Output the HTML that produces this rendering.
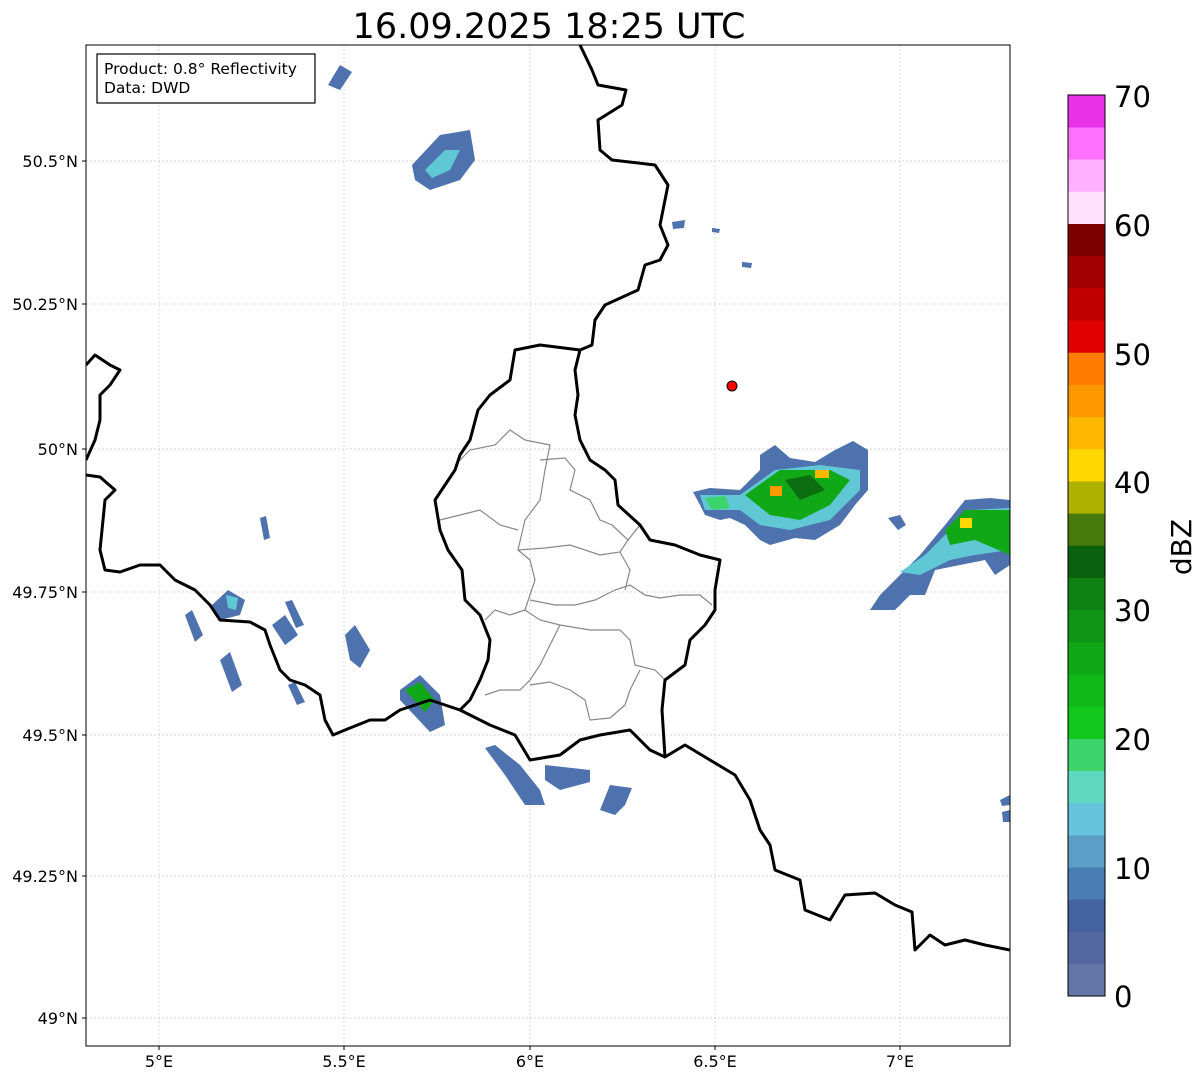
<!DOCTYPE html>
<html><head><meta charset="utf-8"><style>
body{margin:0;background:#fff;width:1202px;height:1081px;overflow:hidden}
svg text{font-family:"DejaVu Sans","Liberation Sans",sans-serif}
</style></head><body>
<svg width="1202" height="1081" xmlns="http://www.w3.org/2000/svg">
<text x="549" y="38" font-size="35" text-anchor="middle">16.09.2025 18:25 UTC</text>
<defs><clipPath id="c"><rect x="86" y="45" width="924" height="1001"/></clipPath></defs>
<g stroke="#c8c8c8" stroke-width="0.7" stroke-dasharray="2,2">
<line x1="159" y1="45" x2="159" y2="1046"/><line x1="344" y1="45" x2="344" y2="1046"/><line x1="530" y1="45" x2="530" y2="1046"/><line x1="715" y1="45" x2="715" y2="1046"/><line x1="900" y1="45" x2="900" y2="1046"/>
<line x1="86" y1="161" x2="1010" y2="161"/><line x1="86" y1="304" x2="1010" y2="304"/><line x1="86" y1="449" x2="1010" y2="449"/><line x1="86" y1="592" x2="1010" y2="592"/><line x1="86" y1="735" x2="1010" y2="735"/><line x1="86" y1="876" x2="1010" y2="876"/><line x1="86" y1="1018" x2="1010" y2="1018"/>
</g>
<g clip-path="url(#c)">
<g>
<polygon fill="#4d72ad" points="693,492 710,488 740,490 760,470 760,455 775,445 790,458 815,462 835,450 853,441 868,450 868,490 855,505 840,525 815,540 795,538 770,545 760,540 745,525 730,518 720,520 705,515 700,505"/>
<polygon fill="#60c8d4" points="700,495 740,495 775,470 820,465 860,470 860,490 830,520 790,530 760,525 740,510 705,510"/>
<polygon fill="#10a816" points="745,495 780,470 830,470 850,480 830,505 800,520 770,515"/>
<polygon fill="#3dd46c" points="705,498 725,496 730,508 712,510"/>
<polygon fill="#0b6e10" points="785,480 810,475 825,490 800,500"/>
<rect x="770" y="486" width="12" height="10" fill="#ff9800"/><rect x="815" y="470" width="14" height="8" fill="#ffb800"/>
<polygon fill="#4d72ad" points="870,610 880,595 900,575 920,555 945,525 965,500 990,498 1010,500 1010,565 995,575 985,560 960,565 935,570 925,595 910,595 895,610"/>
<polygon fill="#60c8d4" points="900,572 925,555 950,530 970,510 1010,508 1010,550 975,555 950,560 920,575"/>
<polygon fill="#10a816" points="945,530 965,510 1010,510 1010,555 975,540 950,545"/>
<rect x="960" y="518" width="12" height="10" fill="#ffd800"/>
<polygon fill="#4d72ad" points="888,518 900,515 906,525 898,530"/>
<polygon fill="#4d72ad" points="412,165 440,135 470,130 475,160 460,180 430,190 415,180"/>
<polygon fill="#60c8d4" points="425,170 445,150 460,150 450,170 432,178"/>
<polygon fill="#4d72ad" points="328,85 340,65 352,72 340,90"/>
<polygon fill="#4d72ad" points="400,690 420,675 440,695 445,725 430,732 400,700"/>
<polygon fill="#10a816" points="405,690 420,682 435,700 425,712"/>
<polygon fill="#4d72ad" points="485,748 495,745 520,765 540,790 545,805 525,805 505,775"/>
<polygon fill="#4d72ad" points="545,765 590,770 590,782 560,790 545,780"/>
<polygon fill="#4d72ad" points="600,810 610,785 632,788 625,805 615,815"/>
<polygon fill="#4d72ad" points="185,615 192,610 203,635 195,642"/>
<polygon fill="#4d72ad" points="212,605 228,590 245,600 240,615 220,620"/>
<polygon fill="#60c8d4" points="226,595 238,598 236,610 228,608"/>
<polygon fill="#4d72ad" points="272,625 285,615 298,635 285,645"/>
<polygon fill="#4d72ad" points="285,602 292,600 304,625 296,628"/>
<polygon fill="#4d72ad" points="220,660 230,652 242,685 232,692"/>
<polygon fill="#4d72ad" points="345,635 355,625 370,650 360,668 350,660"/>
<polygon fill="#4d72ad" points="288,685 295,682 305,702 297,705"/>
<polygon fill="#4d72ad" points="260,518 266,516 270,538 264,540"/>
<polygon fill="#4d72ad" points="672,222 685,220 684,228 673,229"/>
<polygon fill="#4d72ad" points="742,262 752,263 751,268 742,267"/>
<polygon fill="#4d72ad" points="712,228 720,229 719,233 712,232"/>
<polygon fill="#4d72ad" points="1000,800 1010,795 1010,805 1002,806"/>
<polygon fill="#4d72ad" points="1002,812 1010,810 1010,822 1003,822"/>
</g>
<g fill="none" stroke="#888" stroke-width="1.2">
<polyline points="455,465 470,450 495,445 510,430 525,440 550,445 545,470 540,500 525,520 518,550 530,560 535,580 525,610 510,615 495,610 485,620"/>
<polyline points="540,460 565,458 575,470 570,490 590,500 600,520 612,525 628,540 640,525"/>
<polyline points="518,550 545,548 570,545 600,555 620,552 628,540"/>
<polyline points="440,520 460,515 480,510 500,525 518,530"/>
<polyline points="530,600 555,605 575,605 595,600 615,590 630,585 645,595 660,598 680,595 700,595 712,605"/>
<polyline points="525,610 540,620 560,625 590,630 620,630 630,640 635,665 655,670 665,680"/>
<polyline points="560,625 550,645 540,665 530,680 520,690 500,690 485,695"/>
<polyline points="530,685 550,682 570,690 585,700 590,720 610,718 625,705 630,690 640,670"/>
<polyline points="620,552 630,570 625,590"/>
</g>
<g fill="none" stroke="#000" stroke-width="3" stroke-linejoin="round">
<polyline points="580,45 592,70 598,85 626,90 622,105 598,120 600,150 612,160 655,165 668,185 660,225 668,245 660,260 645,265 638,290 605,305 595,320 592,345 580,350 575,370 578,395 575,415 580,440 590,460 605,470 615,480 618,505 640,525 650,540 675,545 700,555 720,560 715,590 715,610 705,625 690,640 685,665 665,680 662,710 665,757 685,745 710,760 735,775 750,800 760,830 770,845 775,870 800,880 805,910 830,920 845,895 875,893 895,905 912,912 915,950 930,935 945,945 965,940 985,945 1010,950"/>
<polyline points="580,350 540,345 515,350 510,380 490,395 478,410 470,440 460,455 455,470 445,485 435,500 440,530 448,550 462,570 465,600 480,615 490,640 488,660 480,680 470,700 460,710 445,705 430,700 415,705 400,710 385,720 370,720 345,730 333,735 325,720 320,695 305,685 290,680 280,670 270,645 265,630 250,622 220,620 210,605 195,590 175,580 160,565 140,565 120,572 105,570 100,550 105,500 115,490 100,477 86,475"/>
<polyline points="460,710 470,715 490,725 515,735 530,760 560,755 580,740 600,735 630,730 650,750 665,757"/>
<polyline points="86,365 95,355 110,365 120,370 110,385 100,395 100,420 95,440 86,460"/>
</g>
</g>
<circle cx="732" cy="386" r="5" fill="#f00" stroke="#000" stroke-width="1"/>
<rect x="86" y="45" width="924" height="1001" fill="none" stroke="#000" stroke-width="1"/>
<g stroke="#000" stroke-width="1">
<line x1="82" y1="161" x2="86" y2="161"/><line x1="82" y1="304" x2="86" y2="304"/><line x1="82" y1="449" x2="86" y2="449"/><line x1="82" y1="592" x2="86" y2="592"/><line x1="82" y1="735" x2="86" y2="735"/><line x1="82" y1="876" x2="86" y2="876"/><line x1="82" y1="1018" x2="86" y2="1018"/>
<line x1="159" y1="1046" x2="159" y2="1050"/><line x1="344" y1="1046" x2="344" y2="1050"/><line x1="530" y1="1046" x2="530" y2="1050"/><line x1="715" y1="1046" x2="715" y2="1050"/><line x1="900" y1="1046" x2="900" y2="1050"/>
</g>
<rect x="97" y="54" width="218" height="49" fill="#fff" stroke="#000" stroke-width="1.2"/>
<text x="104" y="74" font-size="15.5">Product: 0.8° Reflectivity</text>
<text x="104" y="93" font-size="15.5">Data: DWD</text>
<g font-size="16" text-anchor="end">
<text x="78" y="167">50.5°N</text><text x="78" y="310">50.25°N</text><text x="78" y="455">50°N</text><text x="78" y="598">49.75°N</text><text x="78" y="741">49.5°N</text><text x="78" y="882">49.25°N</text><text x="78" y="1024">49°N</text>
</g>
<g font-size="16" text-anchor="middle">
<text x="159" y="1067">5°E</text><text x="344" y="1067">5.5°E</text><text x="530" y="1067">6°E</text><text x="715" y="1067">6.5°E</text><text x="900" y="1067">7°E</text>
</g>
<g>
<rect x="1068" y="963.8" width="37" height="32.5" fill="#6374a7"/>
<rect x="1068" y="931.6" width="37" height="32.5" fill="#5468a0"/>
<rect x="1068" y="899.4" width="37" height="32.5" fill="#4461a0"/>
<rect x="1068" y="867.3" width="37" height="32.5" fill="#4a7db3"/>
<rect x="1068" y="835.1" width="37" height="32.5" fill="#5b9fc7"/>
<rect x="1068" y="802.9" width="37" height="32.5" fill="#66c3dd"/>
<rect x="1068" y="770.7" width="37" height="32.5" fill="#5fd8c0"/>
<rect x="1068" y="738.5" width="37" height="32.5" fill="#3dd46c"/>
<rect x="1068" y="706.4" width="37" height="32.5" fill="#12c81c"/>
<rect x="1068" y="674.2" width="37" height="32.5" fill="#10b818"/>
<rect x="1068" y="642" width="37" height="32.5" fill="#10a816"/>
<rect x="1068" y="609.8" width="37" height="32.5" fill="#0f9615"/>
<rect x="1068" y="577.6" width="37" height="32.5" fill="#0d8212"/>
<rect x="1068" y="545.5" width="37" height="32.5" fill="#0a620e"/>
<rect x="1068" y="513.3" width="37" height="32.5" fill="#477a0c"/>
<rect x="1068" y="481.1" width="37" height="32.5" fill="#b0b000"/>
<rect x="1068" y="448.9" width="37" height="32.5" fill="#ffd800"/>
<rect x="1068" y="416.7" width="37" height="32.5" fill="#ffb800"/>
<rect x="1068" y="384.6" width="37" height="32.5" fill="#ff9800"/>
<rect x="1068" y="352.4" width="37" height="32.5" fill="#ff7c00"/>
<rect x="1068" y="320.2" width="37" height="32.5" fill="#e00000"/>
<rect x="1068" y="288" width="37" height="32.5" fill="#c00000"/>
<rect x="1068" y="255.8" width="37" height="32.5" fill="#a00000"/>
<rect x="1068" y="223.6" width="37" height="32.5" fill="#7c0000"/>
<rect x="1068" y="191.5" width="37" height="32.5" fill="#ffe0ff"/>
<rect x="1068" y="159.3" width="37" height="32.5" fill="#ffb0ff"/>
<rect x="1068" y="127.1" width="37" height="32.5" fill="#ff70ff"/>
<rect x="1068" y="95" width="37" height="32.5" fill="#e832e8"/>
<rect x="1068" y="95" width="37" height="901" fill="none" stroke="#000" stroke-width="1"/>
</g>
<g font-size="29">
<text x="1114" y="1007">0</text><text x="1114" y="879">10</text><text x="1114" y="750">20</text><text x="1114" y="621">30</text><text x="1114" y="493">40</text><text x="1114" y="365">50</text><text x="1114" y="236">60</text><text x="1114" y="107">70</text>
</g>
<text x="1191" y="547" font-size="28" text-anchor="middle" transform="rotate(-90 1191 547)">dBZ</text>
</svg>
</body></html>
